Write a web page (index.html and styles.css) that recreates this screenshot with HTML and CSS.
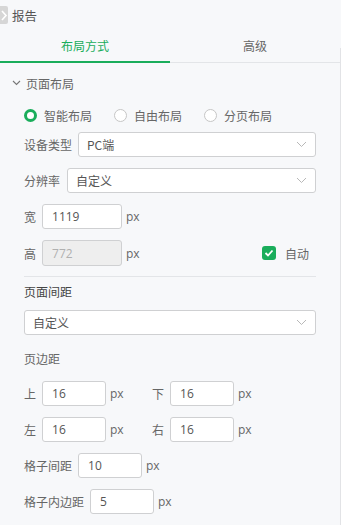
FILE: index.html
```html
<!DOCTYPE html>
<html lang="zh">
<head>
<meta charset="utf-8">
<link rel="stylesheet" href="styles.css">
</head>
<body>
<div class="page">
  <div class="panel">
    <div class="header">
      <span class="collapse"><svg width="8" height="17" viewBox="0 0 8 17"><polyline points="2,4 6,8.5 2,13" fill="none" stroke="#fff" stroke-width="1.6"/></svg></span>
      <span class="title">报告</span>
    </div>
    <div class="tabs">
      <div class="tab active">布局方式</div>
      <div class="tab">高级</div>
    </div>
    <div class="body">
      <div class="section-head">
        <svg class="caret" width="9" height="6" viewBox="0 0 9 6"><polyline points="1,1 4.5,4.5 8,1" fill="none" stroke="#777" stroke-width="1.1"/></svg>
        <span>页面布局</span>
      </div>
      <div class="radios">
        <label class="radio"><span class="dot on"></span>智能布局</label>
        <label class="radio"><span class="dot"></span>自由布局</label>
        <label class="radio"><span class="dot"></span>分页布局</label>
      </div>
      <div class="row r1">
        <span class="lbl">设备类型</span>
        <div class="select"><span>PC端</span><svg width="11" height="7" viewBox="0 0 11 7"><polyline points="1,1 5.5,5.5 10,1" fill="none" stroke="#b8b8b8" stroke-width="1"/></svg></div>
      </div>
      <div class="row r2">
        <span class="lbl">分辨率</span>
        <div class="select"><span>自定义</span><svg width="11" height="7" viewBox="0 0 11 7"><polyline points="1,1 5.5,5.5 10,1" fill="none" stroke="#b8b8b8" stroke-width="1"/></svg></div>
      </div>
      <div class="row r3">
        <span class="lbl">宽</span>
        <div class="input w80">1119</div>
        <span class="px">px</span>
      </div>
      <div class="row r3">
        <span class="lbl">高</span>
        <div class="input w80 disabled">772</div>
        <span class="px">px</span>
        <label class="check"><span class="box"><svg width="10" height="8" viewBox="0 0 10 8"><polyline points="1.5,4 4,6.5 8.5,1.5" fill="none" stroke="#fff" stroke-width="1.8"/></svg></span>自动</label>
      </div>
      <div class="divider"></div>
      <div class="subhead">页面间距</div>
      <div class="row r4">
        <div class="select full"><span>自定义</span><svg width="11" height="7" viewBox="0 0 11 7"><polyline points="1,1 5.5,5.5 10,1" fill="none" stroke="#b8b8b8" stroke-width="1"/></svg></div>
      </div>
      <div class="subtitle">页边距</div>
      <div class="row r5">
        <div class="pair"><span class="lbl">上</span><div class="input w64">16</div><span class="px">px</span></div>
        <div class="pair"><span class="lbl">下</span><div class="input w64">16</div><span class="px">px</span></div>
      </div>
      <div class="row r3">
        <div class="pair"><span class="lbl">左</span><div class="input w64">16</div><span class="px">px</span></div>
        <div class="pair"><span class="lbl">右</span><div class="input w64">16</div><span class="px">px</span></div>
      </div>
      <div class="row r3">
        <span class="lbl">格子间距</span>
        <div class="input w64">10</div>
        <span class="px">px</span>
      </div>
      <div class="row r3">
        <span class="lbl">格子内边距</span>
        <div class="input w64">5</div>
        <span class="px">px</span>
      </div>
    </div>
  </div>
  <div class="edge"></div>
</div>
</body>
</html>
```

FILE: styles.css
```css
* { box-sizing: border-box; }
html, body { margin: 0; padding: 0; }
body {
  background: #f7f8fa;
  font-family: "Noto Sans CJK SC", "Open Sans", sans-serif;
  font-size: 12px;
  color: #666;
  width: 341px;
  height: 525px;
  overflow: hidden;
}
.page { display: flex; }
.panel { width: 340px; }
.edge { width: 1px; background: #e2e3e6; margin-top: 48px; height: 477px; }

.header { height: 30px; display: flex; align-items: center; }
.collapse {
  width: 8px; height: 18px; background: #d6d6d6;
  display: flex; align-items: center; justify-content: center;
  border-radius: 0 2px 2px 0;
}
.collapse svg { display: block; }
.title { margin-left: 4px; font-size: 12.5px; color: #555; }

.tabs { display: flex; height: 33px; border-bottom: 1px solid #e3e5e8; }
.tab {
  width: 170px; text-align: center; line-height: 32px; color: #666;
  font-size: 12px;
}
.tab.active { color: #1aad5b; border-bottom: 2px solid #1aad5b; line-height: 31px; height: 33px; margin-bottom: -1px; }

.body { padding: 0 24px; }
.section-head { display: flex; align-items: center; height: 20px; margin-top: 10px; margin-left: -12px; color: #666; }
.caret { margin-right: 5px; }

.radios { display: flex; align-items: center; height: 20px; margin-top: 12px; }
.radio { display: flex; align-items: center; color: #666; }
.radio:nth-child(1) { width: 90px; }
.radio:nth-child(2) { width: 90px; }
.dot {
  width: 13px; height: 13px; border-radius: 50%;
  border: 1px solid #c6c6c6; background: #fff; margin-right: 7px;
}
.dot.on { border: 3.5px solid #1aad5b; }

.row { display: flex; align-items: center; }
.r1 { margin-top: 7px; }
.r2 { margin-top: 11px; }
.r3 { margin-top: 11px; }
.r4 { margin-top: 8px; }
.r5 { margin-top: 12px; }
.lbl { margin-right: 6px; color: #666; white-space: nowrap; }
.r2 .lbl { margin-right: 7px; }

.select {
  flex: 1; height: 25px; background: #fff; border: 1px solid #cfd0d2; border-radius: 3px;
  display: flex; align-items: center; justify-content: space-between;
  padding: 0 8px 0 8px; color: #555;
}
.select svg { display: block; }

.input {
  height: 25px; background: #fff; border: 1px solid #cfd0d2; border-radius: 3px;
  display: flex; align-items: center; padding-left: 9px; color: #555;
  font-family: "Open Sans", "Noto Sans CJK SC", sans-serif;
}
.input.w80 { width: 80px; }
.input.w64 { width: 64px; }
.input.disabled { background: #eeeeee; color: #b0b0b0; height: 26px; }
.px { margin-left: 4px; color: #666; font-family: "Open Sans", sans-serif; }

.check { margin-left: auto; margin-right: 7px; display: flex; align-items: center; color: #666; }
.box {
  width: 14px; height: 14px; background: #1aad5b; border-radius: 3px; margin-right: 9px;
  display: flex; align-items: center; justify-content: center;
}
.box svg { display: block; }

.divider { height: 1px; background: #e3e5e8; margin-top: 10px; }
.subhead { height: 20px; line-height: 20px; margin-top: 5px; color: #444; font-weight: normal; }
.subtitle { height: 20px; line-height: 20px; margin-top: 14px; color: #666; }

.pair { display: flex; align-items: center; width: 128px; }
```
